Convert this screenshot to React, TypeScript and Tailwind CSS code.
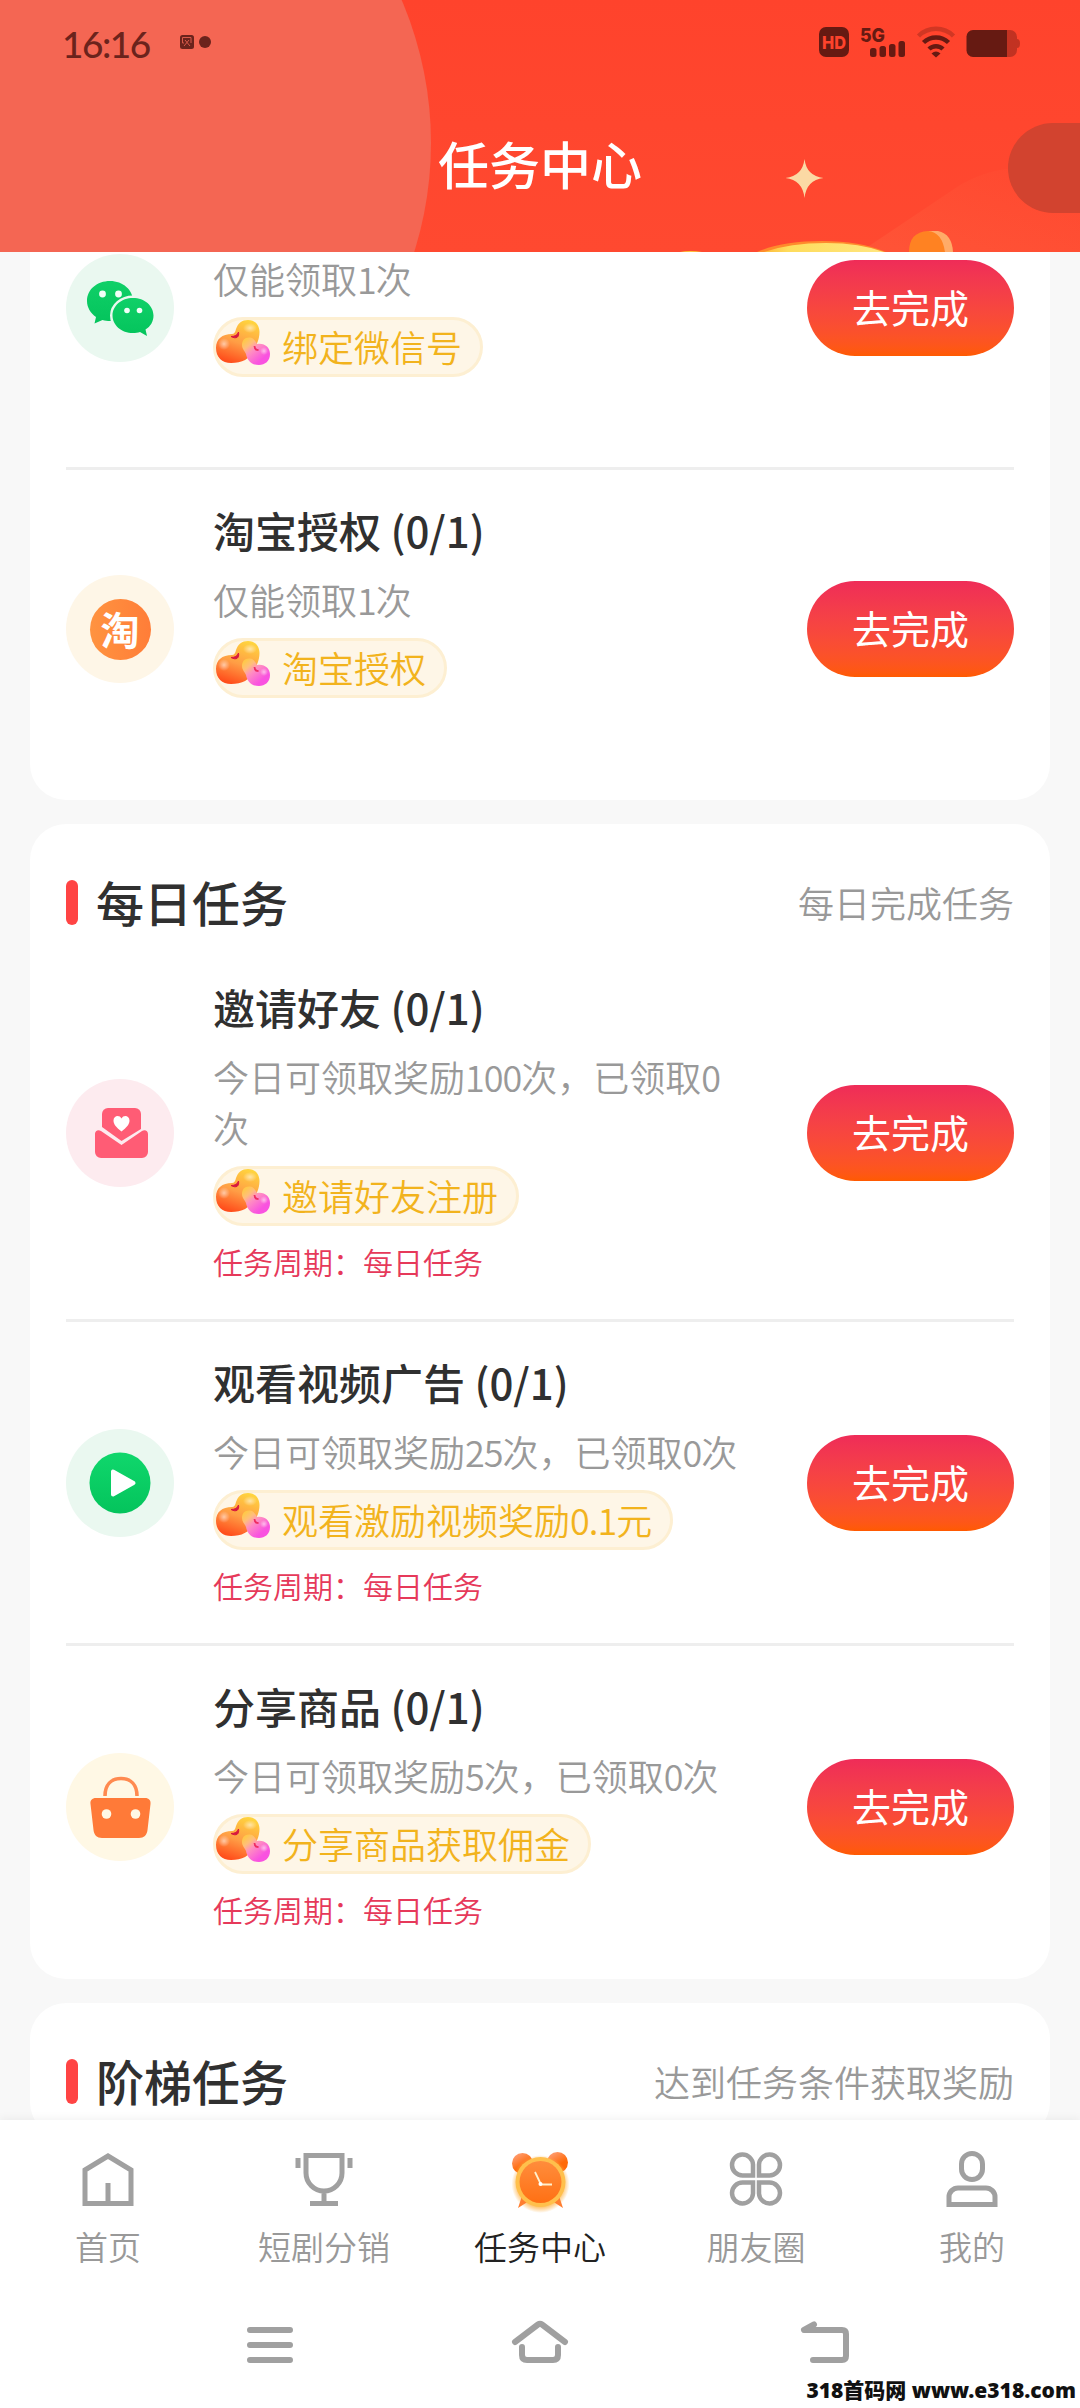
import React from 'react';

type TaskKind = 'wechat' | 'taobao' | 'invite' | 'video' | 'share';

interface Task {
  kind: TaskKind;
  title?: string;
  desc: string;
  reward: string;
  cycle?: string;
}

const accountTasks: Task[] = [
  { kind: 'wechat', desc: '仅能领取1次', reward: '绑定微信号' },
  { kind: 'taobao', title: '淘宝授权 (0/1)', desc: '仅能领取1次', reward: '淘宝授权' },
];

const dailyTasks: Task[] = [
  { kind: 'invite', title: '邀请好友 (0/1)', desc: '今日可领取奖励100次，已领取0次', reward: '邀请好友注册', cycle: '任务周期：每日任务' },
  { kind: 'video', title: '观看视频广告 (0/1)', desc: '今日可领取奖励25次，已领取0次', reward: '观看激励视频奖励0.1元', cycle: '任务周期：每日任务' },
  { kind: 'share', title: '分享商品 (0/1)', desc: '今日可领取奖励5次，已领取0次', reward: '分享商品获取佣金', cycle: '任务周期：每日任务' },
];

// Digits sit tighter than the surrounding Chinese text
function Digits({ text }: { text: string }) {
  return (
    <>
      {text.split(/([\d.]+)/).map((part, i) =>
        /^[\d.]+$/.test(part) ? <span key={i} className="tracking-[-1px]">{part}</span> : part
      )}
    </>
  );
}

function TaskIcon({ kind }: { kind: TaskKind }) {
  switch (kind) {
    case 'wechat':
      return (
        <svg viewBox="0 0 108 108" className="size-[108px]">
          <defs>
            <linearGradient id="wx" x1="0" y1="0" x2="0" y2="1">
              <stop offset="0" stopColor="#10d068" />
              <stop offset="1" stopColor="#04c45c" />
            </linearGradient>
          </defs>
          <circle cx="54" cy="54" r="54" fill="#eaf8f0" />
          <path d="M44 27c-13 0-23 8.500-23 20 0 6.500 3.500 12 9 16l-1.500 6.500 8-3.500c2.500.8 5 1 7.500 1 13 0 23-9 23-20S57 27 44 27z" fill="url(#wx)" />
          <path d="M67 44c-11.500 0-20.500 7.800-20.500 17.500S55.500 79 67 79c2.500 0 5-.3 7-1l7 4-1.500-6.500c5-3 8-8 8-14C87.500 51.800 78.500 44 67 44z" fill="url(#wx)" stroke="#eaf8f0" strokeWidth="5" paintOrder="stroke" />
          <g fill="#f2fff8">
            <circle cx="36.500" cy="40" r="3.400" />
            <circle cx="52.500" cy="40" r="3.400" />
            <circle cx="61" cy="56.500" r="2.800" />
            <circle cx="73.500" cy="56.500" r="2.800" />
          </g>
        </svg>
      );
    case 'taobao':
      return (
        <div className="flex size-[108px] items-center justify-center rounded-full bg-[#fef6e7]">
          <div className="flex size-[61px] items-center justify-center rounded-full bg-gradient-to-r from-[#ff9340] to-[#ff7d38]">
            <span className="-mt-[2px] text-[39px] leading-none font-bold text-white">淘</span>
          </div>
        </div>
      );
    case 'invite':
      return (
        <svg viewBox="0 0 108 108" className="size-[108px]">
          <circle cx="54" cy="54" r="54" fill="#fdebef" />
          <path d="M36 35a6 6 0 0 1 6-6h27a6 6 0 0 1 6 6v15L55.500 62 36 48z" fill="#ff5c75" />
          <path d="M29 55c0-3 3-5 6-3l20.500 14L76 52c3-2 6 0 6 3v18a6 6 0 0 1-6 6H35a6 6 0 0 1-6-6z" fill="#ff5c75" />
          <path d="M55.500 52.500c-5-4-8-7-8-11 0-5 6-6 8-2 2-4 8-3 8 2 0 4-3 7-8 11z" fill="#fff" />
        </svg>
      );
    case 'video':
      return (
        <svg viewBox="0 0 108 108" className="size-[108px]">
          <defs>
            <linearGradient id="play" x1="0" y1="0" x2="0" y2="1">
              <stop offset="0" stopColor="#10d76c" />
              <stop offset="1" stopColor="#04c45c" />
            </linearGradient>
          </defs>
          <circle cx="54" cy="54" r="54" fill="#eaf8f0" />
          <circle cx="54" cy="54" r="30.500" fill="url(#play)" />
          <path d="M47 42.500v23L67.500 54z" fill="#fff" stroke="#fff" strokeWidth="4" strokeLinejoin="round" />
        </svg>
      );
    case 'share':
      return (
        <svg viewBox="0 0 108 108" className="size-[108px]">
          <circle cx="54" cy="54" r="54" fill="#fff8e5" />
          <path d="M39 43c0-11 6-17.500 16-17.500S71 32 71 43" fill="none" stroke="#ff8a50" strokeWidth="3.600" />
          <path d="M30 45h49c4 0 6 2.500 5.500 6l-3 26c-.5 5-3.500 8-8.500 8H36c-5 0-8-3-8.500-8l-3-26c-.5-3.500 1.500-6 5.500-6z" fill="#ff7a38" />
          <circle cx="40.500" cy="61" r="4.800" fill="#fff8e5" />
          <circle cx="69.500" cy="61" r="4.800" fill="#fff8e5" />
        </svg>
      );
  }
}

function BeanIcon() {
  return (
    <svg viewBox="0 0 56 46" className="h-[46px] w-14">
      <defs>
        <linearGradient id="bean" x1=".75" y1="0" x2=".4" y2="1">
          <stop offset="0" stopColor="#ffd53e" />
          <stop offset=".55" stopColor="#ff9d45" />
          <stop offset="1" stopColor="#ff4f1c" />
        </linearGradient>
        <linearGradient id="beanPink" x1=".1" y1=".1" x2=".7" y2=".8">
          <stop offset="0" stopColor="#ffc84a" />
          <stop offset=".25" stopColor="#ffbf7a" />
          <stop offset=".5" stopColor="#ff90c0" />
          <stop offset="1" stopColor="#f952e0" />
        </linearGradient>
        <radialGradient id="beanGlow">
          <stop offset="0" stopColor="#fff" stopOpacity=".55" />
          <stop offset="1" stopColor="#fff" stopOpacity="0" />
        </radialGradient>
      </defs>
      <path d="M16 14C18 14 19.500 12 20 9 22 3 26 0 32 0c7 0 11.500 5 11.500 12 0 8-3.500 13-5.500 18-4 9-12 13-23 13C6 43 0 37 0 28S6 14 16 14z" fill="url(#bean)" />
      <ellipse cx="8" cy="24" rx="6" ry="6" fill="url(#beanGlow)" />
      <ellipse cx="34" cy="8" rx="7" ry="5" fill="url(#beanGlow)" />
      <path d="M15 16.500c4 0 6.500-1.500 7.500-4.500 1 5-2 7.500-7.500 4.500z" fill="#d8173e" stroke="#d8173e" />
      <path d="M26 25c0-5 3-8 8-7.500 4 .5 5 3.500 7 6.500 7-1.500 13 3 13 10s-5 11-11 11c-9 0-12-6-13-11-1-3-4-5-4-9z" fill="url(#beanPink)" />
      <ellipse cx="48" cy="31" rx="4" ry="4" fill="url(#beanGlow)" />
      <path d="M38.500 26c0 2.500 1 4 4 4" fill="none" stroke="#ee2d62" strokeWidth="1.800" />
    </svg>
  );
}

function TaskRow({ task, last }: { task: Task; last: boolean }) {
  return (
    <div className={`flex items-center ${last ? '' : 'border-b-3 border-[#eeeeee]'}`}>
      <TaskIcon kind={task.kind} />
      <div className="ml-[39px] w-[530px] pt-[33px]">
        <h3 className="h-[54px] text-[42px] leading-[54px] font-medium text-[#303030]">{task.title}</h3>
        <p className="mt-[17px] text-[36px] leading-[51px] font-[350] text-[#999999]"><Digits text={task.desc} /></p>
        <div className="mt-[13px] inline-flex h-[60px] items-center rounded-full border-3 border-[#fdefd2] bg-[#fef6e7] pr-[18px] align-top">
          <div className="-mt-[9px]"><BeanIcon /></div>
          <span className="-mt-[3px] ml-[10px] text-[36px] leading-none font-[350] text-[#f2b31d]"><Digits text={task.reward} /></span>
        </div>
        <p className={`mt-3 text-[30px] leading-[46px] font-[350] text-[#e6395a] ${task.cycle ? 'mb-[35px]' : 'mb-8 h-[46px]'}`}>{task.cycle}</p>
      </div>
      <button className="ml-auto h-24 w-[207px] rounded-full bg-gradient-to-b from-[#ef2c58] to-[#ff5a00] pb-[3px] text-[39px] text-white">去完成</button>
    </div>
  );
}

function TaskCard({ title, hint, tasks, className = '' }: { title?: string; hint?: string; tasks: Task[]; className?: string }) {
  return (
    <section className={`shrink-0 rounded-[36px] bg-white px-9 pb-3 ${className}`}>
      {title && (
        <div className="flex h-[123px] items-center pt-[31px]">
          <span className="mt-[3px] h-[45px] w-3 rounded-full bg-[#ff4444]" />
          <h2 className="ml-[18px] text-[48px] leading-[60px] font-medium text-[#303030]">{title}</h2>
          <span className="mt-[2px] ml-auto text-[36px] font-[350] text-[#999999]">{hint}</span>
        </div>
      )}
      {tasks.map((task, i) => (
        <TaskRow key={task.kind} task={task} last={i === tasks.length - 1} />
      ))}
    </section>
  );
}

function StatusIcons() {
  return (
    <svg viewBox="815 20 210 45" className="h-[45px] w-[210px]" fill="#661a12">
      <rect x="819" y="27" width="30" height="30" rx="7" />
      <text x="834" y="48.500" textAnchor="middle" fontSize="18" fontWeight="800" fontFamily="Inter, sans-serif" fill="#ff432c" textLength="24" lengthAdjust="spacingAndGlyphs">HD</text>
      <text x="860" y="42" fontSize="19" fontWeight="800" fontFamily="Inter, sans-serif" textLength="25" lengthAdjust="spacingAndGlyphs">5G</text>
      <rect x="870" y="48" width="6.500" height="9" rx="2.500" />
      <rect x="879.500" y="46" width="6.500" height="11" rx="2.500" />
      <rect x="889" y="44" width="6.500" height="13" rx="2.500" />
      <rect x="898.500" y="41" width="6.500" height="16" rx="2.500" />
      <g fill="none" stroke="#661a12" strokeWidth="4.500">
        <path d="M918.500 36a25 25 0 0 1 35 0" opacity=".3" />
        <path d="M923.500 42.500a18 18 0 0 1 25 0" />
        <path d="M929 49a10 10 0 0 1 14 0" />
      </g>
      <path d="M931.500 53.500q4.500-4 9 0l-4.500 4z" />
      <path d="M1007 30h3a7 7 0 0 1 7 7v2q3 0 3 4.500t-3 4.500v2a7 7 0 0 1-7 7h-3z" opacity=".4" />
      <path d="M973 30h34v27h-34a6.500 6.500 0 0 1-6.500-6.500v-14A6.500 6.500 0 0 1 973 30z" />
    </svg>
  );
}

function Header() {
  return (
    <header className="relative h-[252px] shrink-0 overflow-hidden bg-gradient-to-b from-[#ff432c] to-[#ff4930]">
      <svg viewBox="0 0 1080 252" className="absolute inset-0 h-full w-full">
        <defs>
          <linearGradient id="ray" x1="0" y1="1" x2="1" y2="0">
            <stop offset="0" stopColor="#ff7048" stopOpacity=".28" />
            <stop offset="1" stopColor="#ff7048" stopOpacity=".02" />
          </linearGradient>
          <linearGradient id="dome" x1="0" y1="0" x2="1" y2="0">
            <stop offset="0" stopColor="#fdbb3c" />
            <stop offset=".2" stopColor="#fedc5c" />
            <stop offset="1" stopColor="#ffe680" />
          </linearGradient>
        </defs>
        <circle cx="68" cy="143" r="363" fill="#f46653" />
        <path d="M860 252l100-67q30-17 60-17h60v84z" fill="url(#ray)" />
        <path d="M804.500 159q2 17 19 19-17 2-19 20-2-18-19-20 17-2 19-19z" fill="#fbd9a4" />
        <path d="M757 252q25-11 65-11 38 0 64 11z" fill="#ff8a2c" />
        <path d="M764 252q26-9 62-9 34 0 58 9z" fill="url(#dome)" />
        <path d="M680 252q10-2 22 0z" fill="#ffc83e" />
        <path d="M928 231h10q14 3 15 21h-15z" fill="#ffab68" />
        <path d="M909 252q0-20 19-21 14 1 17 21z" fill="#ff8222" />
      </svg>
      <div className="relative flex h-[84px] items-center justify-between pr-[55px] pl-[62px]">
        <div className="flex items-center">
          <span className="mt-[3px] font-['Lato',sans-serif] text-[37px] font-medium tracking-[-1.500px] text-[#6b231c]">16:16</span>
          <svg viewBox="0 0 36 16" className="ml-[30px] h-4 w-9">
            <rect x="0" y="1" width="14" height="14" rx="2.500" fill="#6b231c" />
            <path d="M11 9V3.500H2.500V9H4M5 6l5 6M9 6l-5 6" fill="none" stroke="#d85a4a" />
            <circle cx="25" cy="8" r="6" fill="#6b231c" />
          </svg>
        </div>
        <StatusIcons />
      </div>
      <h1 className="relative pt-[41px] text-center text-[51px] leading-[76px] font-medium text-white">任务中心</h1>
      <div className="absolute top-[123px] right-0 h-[90px] w-[72px] rounded-l-full bg-[#d2432f]" />
    </header>
  );
}

function ClockIcon() {
  return (
    <svg viewBox="0 0 64 64" className="size-16 overflow-visible">
      <defs>
        <linearGradient id="bell" x1="0" y1="0" x2=".6" y2="1">
          <stop offset="0" stopColor="#ffa888" />
          <stop offset=".7" stopColor="#ff6a08" />
        </linearGradient>
        <linearGradient id="face" x1="0" y1="0" x2="0" y2="1">
          <stop offset="0" stopColor="#ff8d3c" />
          <stop offset="1" stopColor="#ff7014" />
        </linearGradient>
        <radialGradient id="clockGlow">
          <stop offset=".75" stopColor="#ffb347" stopOpacity=".9" />
          <stop offset="1" stopColor="#ffb347" stopOpacity="0" />
        </radialGradient>
      </defs>
      <circle cx="14.500" cy="17.500" r="10.500" fill="url(#bell)" />
      <circle cx="49.500" cy="16.500" r="10.500" fill="url(#bell)" />
      <circle cx="32.500" cy="38" r="29" fill="url(#clockGlow)" />
      <path d="M14 50l-4 12 11-7zM51 50l4 12-11-7z" fill="#ff7e30" />
      <circle cx="32.500" cy="36" r="25" fill="#ffc04c" />
      <circle cx="32.500" cy="36" r="21" fill="url(#face)" />
      <path d="M27 26l6 12.500h11" fill="none" stroke="#fff0cc" strokeWidth="1.800" />
      <circle cx="32.500" cy="38" r="2" fill="#fff" />
    </svg>
  );
}

const tabs = [
  {
    label: '首页',
    icon: (
      <svg viewBox="0 0 64 64" className="size-16" fill="none" stroke="#a0a0a0" strokeWidth="5">
        <path d="M9 57.500V24L32 10l23 14v33.500zM32 57V37" />
      </svg>
    ),
  },
  {
    label: '短剧分销',
    icon: (
      <svg viewBox="0 0 64 64" className="size-16" fill="none" stroke="#a0a0a0" strokeWidth="5">
        <path d="M14 9.500h36V27a18 18 0 0 1-36 0zM32 45v12M18 57.500h28" />
        <path d="M6 12v10M58 12v10" />
      </svg>
    ),
  },
  { label: '任务中心', active: true, icon: <ClockIcon /> },
  {
    label: '朋友圈',
    icon: (
      <svg viewBox="0 0 64 64" className="size-16" fill="none" stroke="#a0a0a0" strokeWidth="4.500">
        <path d="M29 29.500H18.500A10.500 10.500 0 1 1 29 18.500z" />
        <path d="M35 29.500h10.500A10.500 10.500 0 1 0 35 18.500z" />
        <path d="M29 36.500H18.500A10.500 10.500 0 1 0 29 47.500z" />
        <path d="M35 36.500h10.500A10.500 10.500 0 1 1 35 47.500z" />
      </svg>
    ),
  },
  {
    label: '我的',
    icon: (
      <svg viewBox="0 0 64 64" className="size-16" fill="none" stroke="#a0a0a0" strokeWidth="5">
        <rect x="21.500" y="7.500" width="21" height="26" rx="10.500" />
        <path d="M9 58.500V51a9 9 0 0 1 9-9h28a9 9 0 0 1 9 9v7.500z" />
      </svg>
    ),
  },
];

function TabBar() {
  return (
    <nav className="relative grid h-[165px] shrink-0 grid-cols-5 bg-white pt-[26px] shadow-[0_-2px_8px_rgba(0,0,0,0.05)]">
      {tabs.map((tab) => (
        <div key={tab.label} className="flex flex-col items-center">
          {tab.icon}
          <span className={`mt-3 text-[33px] leading-[48px] font-[350] ${tab.active ? 'text-[#222222]' : 'text-[#999999]'}`}>{tab.label}</span>
        </div>
      ))}
    </nav>
  );
}

function SystemNav() {
  return (
    <div className="relative flex h-[123px] shrink-0 items-start bg-white pt-[30px] pl-[237px]">
      <svg viewBox="0 0 66 66" className="size-[66px]" fill="none" stroke="#a0a0a0" strokeWidth="6" strokeLinecap="round">
        <path d="M13 15h40M13 30h40M13 45h40" />
      </svg>
      <svg viewBox="0 0 66 66" className="ml-[204px] size-[66px]" fill="none" stroke="#a0a0a0" strokeWidth="6" strokeLinecap="round">
        <path d="M8 27L31 9.500q2-1.500 4 0L58 27" />
        <path d="M15 32v8q0 5 5 5h26q5 0 5-5v-8" />
      </svg>
      <svg viewBox="0 0 66 66" className="ml-[219px] size-[66px]" fill="none" stroke="#a0a0a0" strokeWidth="6" strokeLinecap="round" strokeLinejoin="round">
        <path d="M22 9.500L12 15h38q4 0 4 4v22q0 4-4 4H21" />
      </svg>
      <span className="absolute right-1 bottom-[3px] font-['Noto_Sans','Noto_Sans_CJK_SC',sans-serif] text-[21px] leading-[30px] font-black whitespace-nowrap text-[#111111]">318首码网 www.e318.com</span>
    </div>
  );
}

export default function App() {
  return (
    <div className="flex h-[2408px] w-[1080px] flex-col overflow-hidden bg-[#f8f8f8] font-['Noto_Sans_CJK_SC',sans-serif]">
      <Header />
      <main className="flex min-h-0 flex-1 flex-col gap-6 overflow-hidden px-[30px]">
        <TaskCard tasks={accountTasks} className="-mt-[103px]" />
        <TaskCard title="每日任务" hint="每日完成任务" tasks={dailyTasks} />
        <TaskCard title="阶梯任务" hint="达到任务条件获取奖励" tasks={[]} />
      </main>
      <TabBar />
      <SystemNav />
    </div>
  );
}
